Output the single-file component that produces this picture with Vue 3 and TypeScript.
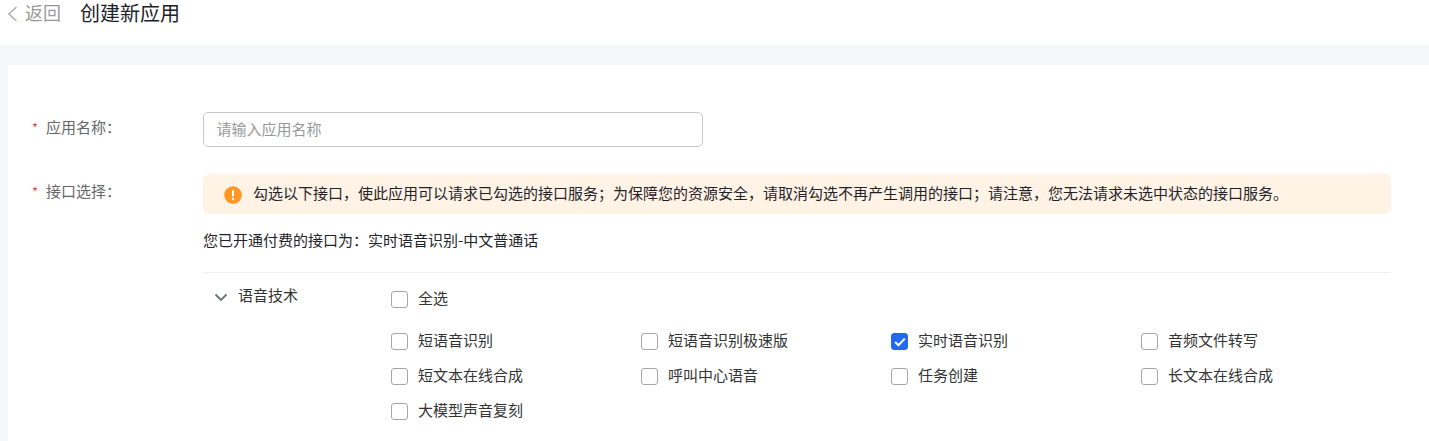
<script setup lang="ts">
interface Api { name: string; checked?: boolean }
const apis: Api[] = [
  { name: '短语音识别' },
  { name: '短语音识别极速版' },
  { name: '实时语音识别', checked: true },
  { name: '音频文件转写' },
  { name: '短文本在线合成' },
  { name: '呼叫中心语音' },
  { name: '任务创建' },
  { name: '长文本在线合成' },
  { name: '大模型声音复刻' },
]
</script>

<template>
  <div class="page">
    <header class="top">
      <div class="back">
        <svg class="back-icon" width="10" height="16" viewBox="0 0 10 16" fill="none"><path d="M9.5 1 1.8 8l7.7 7" stroke="#a6a6a6" stroke-width="1.2" /></svg>
        <span>返回</span>
      </div>
      <h1 class="title">创建新应用</h1>
    </header>
    <main class="wrap">
      <section class="card">
        <div class="row row-name">
          <label class="label"><i>*</i>应用名称：</label>
          <div class="input">请输入应用名称</div>
        </div>
        <div class="row row-api">
          <label class="label label-api"><i>*</i>接口选择：</label>
          <div class="body">
            <div class="alert">
              <svg width="18" height="18" viewBox="0 0 18 18"><circle cx="9" cy="9" r="8.8" fill="#ff9626" /><rect x="8" y="4" width="2" height="6.8" rx="1" fill="#fff" /><circle cx="9" cy="13" r="1.15" fill="#fff" /></svg>
              <span>勾选以下接口，使此应用可以请求已勾选的接口服务；为保障您的资源安全，请取消勾选不再产生调用的接口；请注意，您无法请求未选中状态的接口服务。</span>
            </div>
            <p class="paid">您已开通付费的接口为：实时语音识别-中文普通话</p>
            <div class="group">
              <div class="group-name">
                <svg width="14" height="9" viewBox="0 0 14 9" fill="none"><path d="M1.5 1.5 7 7l5.5-5.5" stroke="#6b7079" stroke-width="1.8" /></svg>
                <span>语音技术</span>
              </div>
              <div class="options">
                <label class="check all"><span class="box"></span><span>全选</span></label>
                <div class="grid">
                  <label v-for="api in apis" :key="api.name" class="check">
                    <span class="box" :class="{ on: api.checked }">
                      <svg v-if="api.checked" width="12" height="10" viewBox="0 0 12 10" fill="none"><path d="M1.2 5 4.4 8.2 10.8 1.6" stroke="#fff" stroke-width="2" /></svg>
                    </span>
                    <span>{{ api.name }}</span>
                  </label>
                </div>
              </div>
            </div>
          </div>
        </div>
      </section>
    </main>
  </div>
</template>

<style>
html, body { margin: 0; background: #fff; overflow: hidden; }
</style>

<style scoped>
.page { height: 441px; overflow: hidden; font-family: "Noto Sans CJK SC", "Liberation Sans", sans-serif; font-size: 15px; color: #1f2329; }
.top { height: 45px; box-sizing: border-box; display: flex; align-items: flex-start; padding: 0 0 0 7px; }
.back { display: flex; align-items: center; gap: 8px; height: 23px; color: #999; font-size: 18px; width: 73px; }
.back-icon { flex: none; margin-top: 5px; }
.title { margin: 0; font-weight: 400; font-size: 20px; line-height: 25px; color: #1d2129; }
.wrap { background: #f5f6f8; padding: 20px 0 0 8px; }
.card { background: #fff; height: 376px; padding: 47px 38px 0 24px; }
.row { display: flex; }
.row-name { height: 62px; }
.label { width: 171px; flex: none; color: #666; line-height: 30px; font-size: 15px; }
.label-api { padding-top: 2px; box-sizing: border-box; }
.label i { color: #e5484d; font-style: normal; display: inline-block; width: 14px; font-size: 13px; }
.input { width: 500px; height: 35px; box-sizing: border-box; border: 1px solid #c8c8c8; border-radius: 5px; padding-left: 12.5px; line-height: 31px; color: #999; }
.body { flex: 1; min-width: 0; }
.alert { height: 39.5px; border-radius: 6px; background: #fff3e6; display: flex; align-items: center; gap: 11px; padding-left: 21px; font-size: 15px; color: #1f2329; }
.alert svg { margin-top: 2px; }
.alert span { padding-bottom: 2px; }
.paid { margin: 15.5px 0 0; line-height: 22px; height: 43px; border-bottom: 1px solid #eeeff1; }
.group { display: flex; padding-top: 12px; }
.group-name { width: 188px; flex: none; display: flex; align-items: flex-start; gap: 10px; padding-left: 11px; box-sizing: border-box; line-height: 20px; color: #333; }
.group-name svg { margin-top: 8px; }
.options { flex: 1; }
.check { display: flex; align-items: center; gap: 10px; height: 35px; color: #333; }
.check.all { height: 24px; margin-bottom: 13px; }
.grid { display: grid; grid-template-columns: repeat(4, 250px); }
.box { width: 17px; height: 17px; box-sizing: border-box; border: 1px solid #a6a6a6; border-radius: 3px; display: flex; align-items: center; justify-content: center; background: #fff; margin-top: 4px; }
.box.on { background: #2468f2; border-color: #2468f2; }
</style>
